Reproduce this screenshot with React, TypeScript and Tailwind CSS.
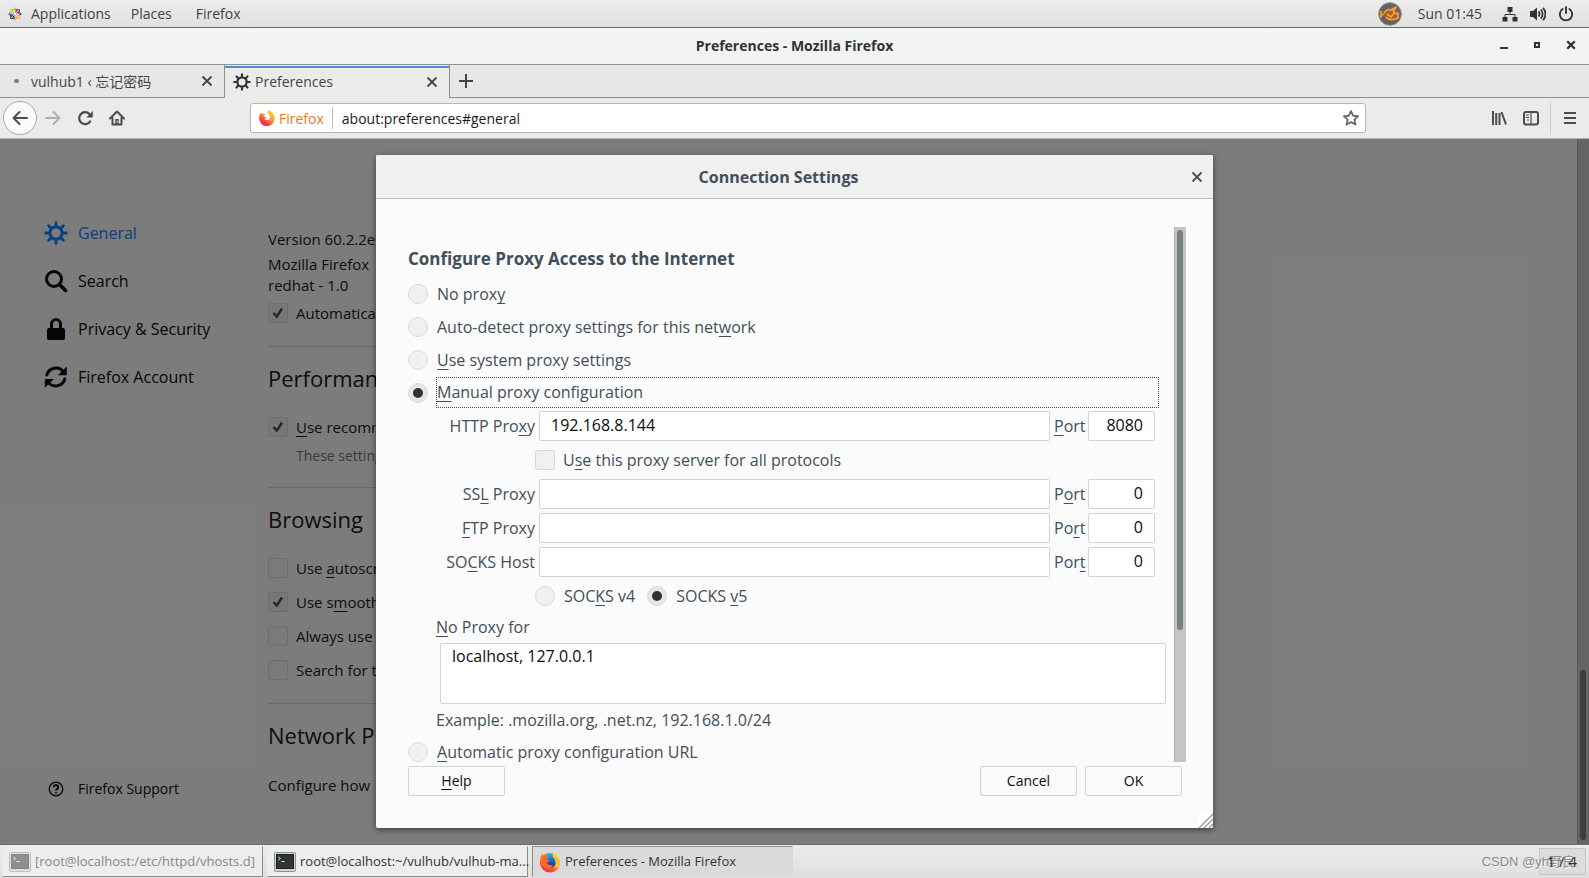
import React from "react";

type IconProps = { className?: string };

const teeth = [0, 45, 90, 135, 180, 225, 270, 315];

function Gear({ className }: IconProps) {
  return (
    <svg viewBox="0 0 24 24" className={className} fill="none" stroke="currentColor" aria-hidden="true">
      <circle cx="12" cy="12" r="6.2" strokeWidth="3" />
      {teeth.map((a) => (
        <path key={a} d="M12 4.8V1.6" strokeWidth="2.8" strokeLinecap="round" transform={`rotate(${a} 12 12)`} />
      ))}
    </svg>
  );
}

function SearchIcon({ className }: IconProps) {
  return (
    <svg viewBox="0 0 24 24" className={className} fill="none" stroke="currentColor" aria-hidden="true">
      <circle cx="10" cy="10" r="7.5" strokeWidth="3" />
      <path d="M15.5 15.5l6 6" strokeWidth="3.6" strokeLinecap="round" />
    </svg>
  );
}

function LockIcon({ className }: IconProps) {
  return (
    <svg viewBox="0 0 24 24" className={className} aria-hidden="true">
      <rect x="3" y="11" width="18" height="12" rx="2" fill="currentColor" />
      <path d="M7.500 12V7a4.500 4.500 0 0 1 9 0v5" fill="none" stroke="currentColor" strokeWidth="3" />
    </svg>
  );
}

function SyncIcon({ className }: IconProps) {
  return (
    <svg viewBox="0 0 24 24" className={className} aria-hidden="true">
      <g fill="none" stroke="currentColor" strokeWidth="3" strokeLinecap="round">
        <path d="M2.800 10a9.500 9.500 0 0 1 16.700-3.200" />
        <path d="M20.800 14a9.500 9.500 0 0 1-16.700 3.200" />
      </g>
      <path d="M22.800 1.400v7.800a1 1 0 0 1-1 1h-8z" fill="currentColor" />
      <path d="M.8 22.800v-7.800a1 1 0 0 1 1-1h8z" fill="currentColor" />
    </svg>
  );
}

function HelpIcon({ className }: IconProps) {
  return (
    <svg viewBox="0 0 16 16" className={className} fill="none" stroke="currentColor" aria-hidden="true">
      <circle cx="8" cy="8" r="6.800" strokeWidth="1.300" />
      <path d="M5.800 6.400a2.200 2.200 0 1 1 3.400 1.600c-.8.500-1.200.700-1.200 1.500" strokeWidth="1.900" />
      <circle cx="8" cy="11.800" r=".6" strokeWidth="1" fill="currentColor" />
    </svg>
  );
}

function Cross({ className, weight = 1.8 }: IconProps & { weight?: number }) {
  return (
    <svg viewBox="0 0 12 12" className={className} fill="none" stroke="currentColor" strokeWidth={weight} aria-hidden="true">
      <path d="M1.500 1.500l9 9M10.500 1.500l-9 9" />
    </svg>
  );
}

function CentosLogo({ className }: IconProps) {
  return (
    <svg viewBox="0 0 14 14" className={className} aria-hidden="true">
      <path d="M7 0l2.400 3H4.600z" fill="#d9c93c" />
      <path d="M7 14l2.400-3H4.600z" fill="#b5c94c" />
      <path d="M0 7l3-2.400v4.800z" fill="#a35aa0" />
      <path d="M14 7l-3-2.400v4.800z" fill="#5a4f94" />
      <rect x="2" y="2" width="4.600" height="4.600" fill="#b4d45c" />
      <rect x="7.400" y="2" width="4.600" height="4.600" fill="#a34a98" />
      <rect x="2" y="7.400" width="4.600" height="4.600" fill="#45438a" />
      <rect x="7.400" y="7.400" width="4.600" height="4.600" fill="#f2b45c" />
      <path d="M3 3l8 8M11 3l-8 8" stroke="#f3ecf3" strokeWidth=".8" />
    </svg>
  );
}

function FirefoxMark({ className }: IconProps) {
  return (
    <svg viewBox="0 0 16 16" className={className} aria-hidden="true">
      <defs>
        <linearGradient id="ffm" x1="0.9" y1="0" x2="0.15" y2="1">
          <stop offset="0.05" stopColor="#ffe226" />
          <stop offset="0.45" stopColor="#ff9640" />
          <stop offset="0.75" stopColor="#ff3647" />
          <stop offset="1" stopColor="#e31587" />
        </linearGradient>
      </defs>
      <path
        d="M9.200.2c3.600 1 6.600 4 6.600 8a7.800 7.800 0 0 1-15.600.2C.1 6 .8 3.600 2 2.400c.1.800.3 1.200.7 1.600C4 3.200 5.400 3.500 6.400 4.400c.2.200.2.500 0 .700-.7.500-1.600.700-1.500 1.400.8.300 1.900 0 2.300.9-.3.700-1 .9-1.700 1.100.6 1.300 2 1.900 3.300 1.600 1.700-.3 2.700-1.700 2.400-3.300-.2-1.200-1-2-1.800-2.800C8.500 3 8.400 1.300 9.200.2z"
        fill="url(#ffm)"
      />
    </svg>
  );
}

function FirefoxLogo({ className }: IconProps) {
  return (
    <svg viewBox="0 0 24 24" className={className} aria-hidden="true">
      <defs>
        <linearGradient id="ffl" x1="0.85" y1="0" x2="0.2" y2="1">
          <stop offset="0" stopColor="#fff03a" />
          <stop offset="0.35" stopColor="#ffb02a" />
          <stop offset="0.65" stopColor="#ff5a2e" />
          <stop offset="1" stopColor="#e8157a" />
        </linearGradient>
        <linearGradient id="ffg" x1="0" y1="0" x2="0" y2="1">
          <stop offset="0" stopColor="#1cc3f5" />
          <stop offset="0.5" stopColor="#1266d8" />
          <stop offset="1" stopColor="#2b2a80" />
        </linearGradient>
      </defs>
      <circle cx="12" cy="12.500" r="11" fill="url(#ffl)" />
      <circle cx="12" cy="10" r="7.800" fill="url(#ffg)" />
      <path d="M15 1c3.500 2.500 4.800 6.200 4.500 10 1.200-.8 1.700-2.500 1.500-4 2 3 2.300 7 .5 10.200l-5 2C19.500 14 18 9 15 6.500z" fill="#ffc52e" />
      <path d="M1.500 9c.2-2.700 1-4.700 2.500-6 .2 1.200.5 2 1 2.500C7.500 4.500 9.500 5 11 6.500c-.6 1.400-2 1.600-3 2.200.5 1 2.500.3 3.500 1.600-.6 1.600-2 1.700-3.300 2.200.9 2.400 3.500 3.500 7 2.500-1.800 4.500-7.700 5.500-11 2C2 15 1.200 12 1.500 9z" fill="#ff6b22" />
    </svg>
  );
}

function TerminalIcon({ className }: IconProps) {
  return (
    <svg viewBox="0 0 22 20" className={className} aria-hidden="true">
      <rect x="0.500" y="0.500" width="21" height="19" rx="1" fill="#d5d5d3" stroke="#8f8f8b" />
      <rect x="2.500" y="2.500" width="17" height="14" fill="#2e3634" stroke="#1b1f1e" />
      <path d="M4.500 5l2 1.500-2 1.500M7.500 9.500h3" fill="none" stroke="#e8e8e8" />
    </svg>
  );
}

function Check({
  id,
  checked = false,
  dark = false,
}: {
  id: string;
  checked?: boolean;
  dark?: boolean;
}) {
  return (
    <span className="grid size-5 shrink-0">
      <input
        id={id}
        type="checkbox"
        defaultChecked={checked}
        className={
          dark
            ? "peer col-start-1 row-start-1 size-5 appearance-none rounded-xs border border-[#dcdcde] bg-[#f4f4f4] checked:bg-[#eeeeec]"
            : "peer col-start-1 row-start-1 size-5 appearance-none rounded-xs border border-[#d6d6d6] bg-[#f0f0f0]"
        }
      />
      <svg
        viewBox="0 0 20 20"
        className="pointer-events-none invisible col-start-1 row-start-1 size-5 peer-checked:visible"
        fill="none"
        stroke="#454d50"
        strokeWidth="2.4"
        aria-hidden="true"
      >
        <path d="M5.500 10l3.300 3.600L14 5.500" />
      </svg>
    </span>
  );
}

function Radio({ id, name, checked = false }: { id: string; name: string; checked?: boolean }) {
  return (
    <input
      id={id}
      name={name}
      type="radio"
      defaultChecked={checked}
      className="grid size-5 shrink-0 appearance-none place-items-center rounded-full border border-[#dadada] bg-[#f0f0f0] before:size-[10px] before:rounded-full before:content-[''] checked:bg-[#e6e6e5] checked:before:bg-[#2e3436]"
    />
  );
}

/* Marks the access key of a label. */
function Key({ children }: { children: React.ReactNode }) {
  return <u className="underline-offset-3 [text-decoration-skip-ink:none]">{children}</u>;
}

const field =
  "h-[30px] w-full min-w-0 rounded-xs border border-[#d3d4d8] bg-white px-[11px] pb-[2px] text-[16px] text-[#0c0c0d] outline-none";

function ProxyRow({
  id,
  label,
  portLabel,
  host = "",
  port,
}: {
  id: string;
  label: React.ReactNode;
  portLabel: React.ReactNode;
  host?: string;
  port: string;
}) {
  return (
    <div className="grid grid-cols-[99px_1fr_30px_67px] items-center gap-1">
      <label htmlFor={id} className="text-right whitespace-nowrap">
        {label}
      </label>
      <input id={id} defaultValue={host} className={field} />
      <label htmlFor={`${id}-port`} className="whitespace-nowrap">
        {portLabel}
      </label>
      <input id={`${id}-port`} defaultValue={port} className={`${field} text-right`} />
    </div>
  );
}

function TopBar() {
  return (
    <header className="flex h-7 shrink-0 items-center border-b border-[#6a6a6a] bg-linear-to-b from-[#ececec] to-[#e0e0e0] pl-2 text-[14px] text-[#3c4245]">
      <CentosLogo className="size-[14px]" />
      <div className="ml-[9px] flex gap-5">
        <button>Applications</button>
        <button>Places</button>
        <button className="ml-1">Firefox</button>
      </div>
      <div className="ml-auto flex items-center pr-[15px] text-[#2e3436]">
        <svg viewBox="0 0 24 24" className="mr-4 size-6" aria-hidden="true">
          <circle cx="12" cy="12" r="11.300" fill="#666360" />
          <circle cx="12" cy="12" r="11.300" fill="none" stroke="#8a8884" strokeWidth="1" />
          <path d="M7 10l5-3 3 1 3-3-1 5 3 0v5l-3 2H9l-3-4z" fill="#a8602a" />
          <g fill="none" stroke="#ffa23c" strokeWidth="1.600" strokeLinejoin="round">
            <path d="M3 9v7M3 12.500h3M6 11c2-3 5-4 7-3l5-3-3 5M8 15c2 2.500 6 3 9 2l3-1v-5l-3 1M9 12l4 3 4-5" />
          </g>
        </svg>
        <span className="mr-5 text-[#3c4245]">Sun 01:45</span>
        <svg viewBox="0 0 16 16" className="mr-3 size-4" fill="currentColor" aria-hidden="true">
          <path d="M5.500 1h5v5h-5zM.5 11h5v4.500h-5zM10.500 11h5v4.500h-5z" />
          <path d="M8 6v3M3 11.500V8.500h10v3" fill="none" stroke="currentColor" />
        </svg>
        <svg viewBox="0 0 16 16" className="mr-3 size-4" aria-hidden="true">
          <path d="M0 5h3L7 1.500v13L3 11H0z" fill="currentColor" />
          <path d="M8.500 5.500a3.500 3.500 0 0 1 0 5M10.800 3.500a6.500 6.500 0 0 1 0 9M13 1.800a9 9 0 0 1 0 12.400" fill="none" stroke="currentColor" strokeWidth="1.800" />
        </svg>
        <svg viewBox="0 0 16 16" className="size-4" fill="none" stroke="currentColor" strokeWidth="1.900" strokeLinecap="round" aria-hidden="true">
          <path d="M4.600 3A6.200 6.200 0 1 0 11.400 3M8 1v6" />
        </svg>
      </div>
    </header>
  );
}

function TitleBar() {
  return (
    <div className="grid h-[37px] shrink-0 grid-cols-[1fr_auto_1fr] items-center border-b border-[#8f908c] bg-[#f3f3f3] pb-[2px] text-[14px] font-bold text-[#2e3436]">
      <h1 className="col-start-2">Preferences - Mozilla Firefox</h1>
      <div className="flex items-center justify-end gap-[26px] pr-[13px]">
        <button aria-label="Minimize" className="flex h-2 w-2 items-end">
          <span className="h-[2px] w-2 bg-current" />
        </button>
        <button aria-label="Maximize" className="size-[6px] border-2 border-current" />
        <button aria-label="Close window">
          <Cross className="size-[10px]" weight={2.8} />
        </button>
      </div>
    </div>
  );
}

function TabStrip() {
  return (
    <div className="flex h-[33px] shrink-0 bg-[#e7e7e5] text-[14px] text-[#3e4649]">
      <div className="flex w-[225px] items-center border-r border-b border-[#8f908c] pr-[11px] pl-[14px]">
        <span className="mr-3 h-1 w-[5px] rounded-full bg-[#7a7f80]" />
        <span className="flex-1">vulhub1 ‹ 忘记密码</span>
        <button aria-label="Close tab">
          <Cross className="size-3" />
        </button>
      </div>
      <div className="flex w-[225px] flex-col border-r border-[#8f908c] bg-[#ebebea]">
        <span className="mt-px h-[2px] bg-[#4a90d9]" />
        <div className="flex flex-1 items-center pr-[11px] pb-[3px] pl-2">
          <Gear className="size-[18px] text-[#2e3436]" />
          <span className="ml-1 flex-1">Preferences</span>
          <button aria-label="Close tab">
            <Cross className="size-3" />
          </button>
        </div>
      </div>
      <div className="flex flex-1 items-center border-b border-[#8f908c] pl-[9px]">
        <button aria-label="New tab">
          <svg viewBox="0 0 14 14" className="size-[14px]" stroke="currentColor" strokeWidth="2" aria-hidden="true">
            <path d="M7 0v14M0 7h14" />
          </svg>
        </button>
      </div>
    </div>
  );
}

function NavBar() {
  return (
    <div className="flex h-[41px] shrink-0 items-center border-b border-[#b4b4b0] bg-[#ebebea] pr-3 pl-[3px] text-[#474d50]">
      <button aria-label="Back" className="grid size-[34px] place-items-center rounded-full border border-[#a9a9a6] bg-[#fbfbfb]">
        <svg viewBox="0 0 16 16" className="size-4" fill="none" stroke="currentColor" strokeWidth="2" strokeLinecap="round" strokeLinejoin="round" aria-hidden="true">
          <path d="M15 8H1.500M7.500 2L1.500 8l6 6" />
        </svg>
      </button>
      <button aria-label="Forward" className="ml-2 text-[#aeb0ae]">
        <svg viewBox="0 0 16 16" className="size-4" fill="none" stroke="currentColor" strokeWidth="2" strokeLinecap="round" strokeLinejoin="round" aria-hidden="true">
          <path d="M1 8h13.500M8.500 2l6 6-6 6" />
        </svg>
      </button>
      <button aria-label="Reload" className="ml-4">
        <svg viewBox="0 0 16 16" className="size-4" aria-hidden="true">
          <path d="M13.200 11.400A6 6 0 1 1 12.500 4" fill="none" stroke="currentColor" strokeWidth="2.200" strokeLinecap="round" />
          <path d="M15.800 1v5.800a.6.600 0 0 1-.6.600H9.300z" fill="currentColor" />
        </svg>
      </button>
      <button aria-label="Home" className="ml-4">
        <svg viewBox="0 0 16 16" className="size-4" fill="none" stroke="currentColor" strokeWidth="2" strokeLinecap="round" strokeLinejoin="round" aria-hidden="true">
          <path d="M1 8.500l7-7 7 7M3.500 8v6.500h9V8" />
          <path d="M6.300 9h3.400v5.500H6.300z" fill="currentColor" stroke="none" />
          <path d="M8.300 11v1" stroke="#ebebea" strokeWidth="1.200" />
        </svg>
      </button>
      <div className="mr-[125px] ml-[125px] flex h-[30px] flex-1 items-center rounded-[3px] border border-[#b6b6b3] bg-white pr-[6px] pl-2 text-[14px]">
        <FirefoxMark className="size-4" />
        <span className="ml-1 text-[#e67d16]">Firefox</span>
        <span className="ml-2 h-[22px] w-px bg-[#bdbdbd]" />
        <input aria-label="Address" defaultValue="about:preferences#general" className="ml-[9px] min-w-0 flex-1 text-[#1a1a1a] outline-none" />
        <button aria-label="Bookmark this page" className="text-[#6b6b6b]">
          <svg viewBox="0 0 16 16" className="size-4" fill="none" stroke="currentColor" strokeWidth="1.900" strokeLinejoin="round" aria-hidden="true">
            <path d="M8 1.200l2.100 4.500 4.900.6-3.600 3.300 1 4.900L8 12.100l-4.400 2.400 1-4.900L1 6.300l4.900-.6z" />
          </svg>
        </button>
      </div>
      <button aria-label="Library">
        <svg viewBox="0 0 16 16" className="size-4" fill="none" stroke="currentColor" strokeWidth="2" aria-hidden="true">
          <path d="M2 1v14M5.200 3v12M8.500 3v12M10.500 2l4.500 12.500" />
        </svg>
      </button>
      <button aria-label="Sidebars" className="ml-4">
        <svg viewBox="0 0 16 16" className="size-4" fill="none" stroke="currentColor" aria-hidden="true">
          <rect x="1" y="2" width="14" height="12.500" rx="2" strokeWidth="2" />
          <path d="M8 2v12.500" strokeWidth="1.200" />
          <path d="M3 5h3M3 7.500h3M4 10h2" />
        </svg>
      </button>
      <span className="mr-3 ml-[11px] h-[34px] w-px bg-[#cdcdcb]" />
      <button aria-label="Open menu">
        <svg viewBox="0 0 14 14" className="size-[14px]" stroke="currentColor" strokeWidth="2" aria-hidden="true">
          <path d="M1 2h12M1 7h12M1 12h12" />
        </svg>
      </button>
    </div>
  );
}

function SideNav() {
  const items = [
    { label: "General", icon: <Gear className="size-6" />, active: true },
    { label: "Search", icon: <SearchIcon className="size-6" /> },
    { label: "Privacy & Security", icon: <LockIcon className="size-6" /> },
    { label: "Firefox Account", icon: <SyncIcon className="size-6" /> },
  ];
  return (
    <nav className="flex w-[268px] shrink-0 flex-col pt-[70px] pb-[45px] pl-11 text-[16px]">
      {items.map((item) => (
        <a
          key={item.label}
          href="#general"
          className={
            item.active
              ? "flex h-12 items-center gap-[10px] text-[#0a84ff]"
              : "flex h-12 items-center gap-[10px] text-[#0c0c0d]"
          }
        >
          {item.icon}
          {item.label}
        </a>
      ))}
      <a href="#support" className="mt-auto flex items-center text-[14px] text-[#0c0c0d]">
        <HelpIcon className="mr-[14px] ml-1 size-4" />
        Firefox Support
      </a>
    </nav>
  );
}

function Option({ id, checked, children }: { id: string; checked?: boolean; children: React.ReactNode }) {
  return (
    <div className="flex h-[34px] items-center gap-2">
      <Check id={id} checked={checked} dark />
      <label htmlFor={id}>{children}</label>
    </div>
  );
}

function Preferences() {
  return (
    <div className="flex h-full bg-[#f9f9fa] text-[#1a1a1a]">
      <SideNav />
      <main className="max-w-[664px] flex-1 overflow-hidden pt-[88px] text-[15px]">
        <p className="leading-6">Version 60.2.2esr</p>
        <p className="mt-[3px] leading-[21px]">Mozilla Firefox</p>
        <p className="leading-[21px]">redhat - 1.0</p>
        <Option id="auto-update" checked>
          Automatically
        </Option>
        <hr className="mt-4 border-[#d7d7db]" />
        <h2 className="mt-[15px] text-[22px] leading-8">Performance</h2>
        <div className="mt-4">
          <Option id="recommended" checked>
            <Key>U</Key>se recommended
          </Option>
          <p className="ml-7 text-[14px] leading-6 text-[#737373]">These settings</p>
        </div>
        <hr className="mt-[19px] border-[#d7d7db]" />
        <h2 className="mt-[15px] text-[22px] leading-8">Browsing</h2>
        <div className="mt-4">
          <Option id="autoscroll">
            Use <Key>a</Key>utoscrolling
          </Option>
          <Option id="smooth" checked>
            Use s<Key>m</Key>ooth
          </Option>
          <Option id="cursor">Always use</Option>
          <Option id="search-text">Search for text</Option>
        </div>
        <hr className="mt-4 border-[#d7d7db]" />
        <h2 className="mt-[15px] text-[22px] leading-8">Network Proxy</h2>
        <p className="mt-[22px] leading-6">Configure how</p>
      </main>
      <div className="ml-auto flex w-3 flex-col justify-end border-l border-[#b0b4b2] bg-[#c6caca] pr-[3px] pb-1 pl-[2px]">
        <div className="h-[170px] rounded-full bg-[#787c7b]" />
      </div>
    </div>
  );
}

function ConnectionDialog() {
  return (
    <section
      role="dialog"
      aria-label="Connection Settings"
      className="relative flex w-full max-w-[837px] flex-col overflow-hidden rounded-xs bg-[#fbfbfb] text-[16px] text-[#424f5a] shadow-[0_2px_6px_rgba(0,0,0,0.5)]"
    >
      <header className="flex h-11 shrink-0 items-center border-b border-[#bfc1c1] bg-[#f0f0f0]">
        <h2 className="flex-1 text-center text-[16px] font-bold">Connection Settings</h2>
        <button aria-label="Close" className="grid w-8 place-items-center">
          <Cross className="size-3" />
        </button>
      </header>

      <div className="mt-7 mr-[27px] ml-8 flex h-[535px]">
        <div className="flex-1 overflow-hidden pt-[17px]">
          <h3 className="mb-[3px] text-[17px] leading-[30px] font-bold">Configure Proxy Access to the Internet</h3>
          <div className="flex h-[33px] items-center gap-[9px]">
            <Radio id="no-proxy" name="mode" />
            <label htmlFor="no-proxy">
              No prox<Key>y</Key>
            </label>
          </div>
          <div className="flex h-[33px] items-center gap-[9px]">
            <Radio id="auto-detect" name="mode" />
            <label htmlFor="auto-detect">
              Auto-detect proxy settings for this net<Key>w</Key>ork
            </label>
          </div>
          <div className="flex h-[33px] items-center gap-[9px]">
            <Radio id="system" name="mode" />
            <label htmlFor="system">
              <Key>U</Key>se system proxy settings
            </label>
          </div>
          <div className="flex h-[33px] items-center gap-2 pr-[15px]">
            <Radio id="manual" name="mode" checked />
            <label htmlFor="manual" className="h-[31px] flex-1 border border-dotted border-[#424f5a] leading-[29px]">
              <Key>M</Key>anual proxy configuration
            </label>
          </div>

          <div className="mt-[2px] flex flex-col gap-1 pr-[19px] pl-7">
            <ProxyRow id="http" host="192.168.8.144" port="8080" label={<>HTTP Pro<Key>x</Key>y</>} portLabel={<><Key>P</Key>ort</>} />
            <div className="ml-[99px] flex h-[30px] items-center gap-2">
              <Check id="all-protocols" />
              <label htmlFor="all-protocols">
                U<Key>s</Key>e this proxy server for all protocols
              </label>
            </div>
            <ProxyRow id="ssl" port="0" label={<>SS<Key>L</Key> Proxy</>} portLabel={<>P<Key>o</Key>rt</>} />
            <ProxyRow id="ftp" port="0" label={<><Key>F</Key>TP Proxy</>} portLabel={<>Po<Key>r</Key>t</>} />
            <ProxyRow id="socks" port="0" label={<>SO<Key>C</Key>KS Host</>} portLabel={<>Por<Key>t</Key></>} />
            <div className="ml-[99px] flex h-[30px] items-center">
              <Radio id="v4" name="socks" />
              <label htmlFor="v4" className="mr-3 ml-[9px]">
                SOC<Key>K</Key>S v4
              </label>
              <Radio id="v5" name="socks" checked />
              <label htmlFor="v5" className="ml-[9px]">
                SOCKS <Key>v</Key>5
              </label>
            </div>
          </div>

          <div className="flex flex-col pr-2 pl-7">
            <label htmlFor="exceptions" className="mt-1 leading-6">
              <Key>N</Key>o Proxy for
            </label>
            <textarea
              id="exceptions"
              defaultValue="localhost, 127.0.0.1"
              className="mt-1 ml-1 h-[61px] resize-none rounded-xs border border-[#d3d4d8] bg-white px-[11px] py-0 leading-6 text-[#0c0c0d] outline-none"
            />
            <p className="mt-1 leading-6">Example: .mozilla.org, .net.nz, 192.168.1.0/24</p>
          </div>
          <div className="mt-[3px] flex h-[33px] items-center gap-[9px]">
            <Radio id="pac" name="mode" />
            <label htmlFor="pac">
              <Key>A</Key>utomatic proxy configuration URL
            </label>
          </div>
        </div>
        <div className="w-3 shrink-0 border-l border-[#aeb2b1] bg-[#c4c6c5] pt-[3px] pr-[3px] pl-[2px]">
          <div className="h-[400px] rounded-full bg-[#7a7f7f]" />
        </div>
      </div>

      <footer className="mt-1 flex gap-2 pr-[31px] pl-8 text-[14px] text-[#0c0c0d]">
        <button className="mr-auto h-[30px] w-[97px] rounded-xs border border-[#d3d4d8] bg-[#fafafa] pb-[2px]">
          <Key>H</Key>elp
        </button>
        <button className="h-[30px] w-[97px] rounded-xs border border-[#d3d4d8] bg-[#fafafa] pb-[2px]">Cancel</button>
        <button className="h-[30px] w-[97px] rounded-xs border border-[#d3d4d8] bg-[#fafafa] pb-[2px]">OK</button>
      </footer>

      <svg viewBox="0 0 15 15" className="absolute right-0 bottom-0 size-[15px] bg-white" stroke="#9a9a9a" strokeWidth="1.300" aria-hidden="true">
        <path d="M1 15L15 1M6 15l9-9M11 15l4-4" />
      </svg>
    </section>
  );
}

const task = "flex h-[31px] w-[261px] shrink-0 items-center gap-1 border px-[6px]";

function TaskBar() {
  return (
    <footer className="flex h-[34px] shrink-0 items-center gap-1 border-t border-[#6a6a6a] bg-linear-to-b from-[#ececec] to-[#dfdfdf] pr-[3px] pl-[2px] text-[13px] text-[#2e3436]">
      <button className={`${task} border-transparent border-r-[#8b8b8b] border-b-[#8b8b8b] bg-[#ededed] text-[#858886]`}>
        <TerminalIcon className="h-5 w-[22px] shrink-0 opacity-50" />
        <span className="whitespace-nowrap">[root@localhost:/etc/httpd/vhosts.d]</span>
      </button>
      <button className={`${task} border-transparent border-r-[#8b8b8b] border-b-[#8b8b8b] bg-[#ededed]`}>
        <TerminalIcon className="h-5 w-[22px] shrink-0" />
        <span className="whitespace-nowrap">root@localhost:~/vulhub/vulhub-ma...</span>
      </button>
      <button className={`${task} border-transparent border-t-[#8b8b8b] border-l-[#8b8b8b] bg-[#dadada]`}>
        <FirefoxLogo className="size-[22px] shrink-0" />
        <span className="whitespace-nowrap">Preferences - Mozilla Firefox</span>
      </button>
      <div className="relative ml-auto flex h-[27px] w-[47px] items-center justify-end border border-[#c6c6c6] bg-[#dcdcdc] pr-2 text-[15px]">
        <span className="absolute right-[10px] font-['Liberation_Sans','Noto_Sans_CJK_SC',sans-serif] text-[13px] whitespace-nowrap text-[#8a8a8a] [text-shadow:1px_1px_0_#f4f4f4]">
          CSDN @yh野良
        </span>
        <span className="relative">1 / 4</span>
      </div>
    </footer>
  );
}

export default function App() {
  return (
    <div className="flex h-screen flex-col overflow-hidden font-['Open_Sans','Noto_Sans_CJK_SC',sans-serif]">
      <TopBar />
      <TitleBar />
      <TabStrip />
      <NavBar />
      <div className="relative min-h-0 flex-1">
        <Preferences />
        <div className="absolute inset-0 flex justify-center bg-black/50 p-4">
          <ConnectionDialog />
        </div>
      </div>
      <TaskBar />
    </div>
  );
}
